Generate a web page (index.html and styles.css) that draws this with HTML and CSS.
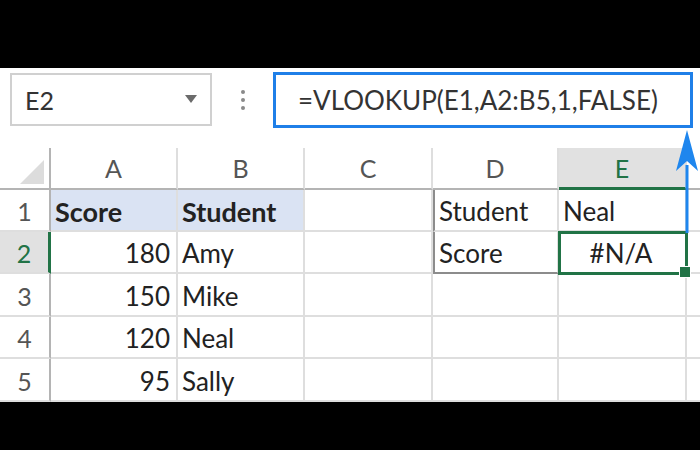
FILE: index.html
```html
<!DOCTYPE html>
<html lang="en">
<head>
    <meta charset="UTF-8">
    <meta name="viewport" content="width=device-width, initial-scale=1.0">
    <title>VLOOKUP #N/A</title>
    <link rel="stylesheet" href="styles.css">
</head>
<body>
    <div class="frame">
        <div class="band"></div>

        <!-- Name box and formula bar -->
        <div class="toolbar">
            <div class="name-box">
                <span>E2</span>
                <svg class="caret" width="12" height="8" viewBox="0 0 12 8"><path d="M0 0H12L6 8Z" fill="#6b6b6b"/></svg>
            </div>
            <div class="dots"><i></i><i></i><i></i></div>
            <div class="formula">=VLOOKUP(E1,A2:B5,1,FALSE)</div>
        </div>

        <!-- Worksheet grid -->
        <div class="sheet">
            <div class="corner"><span class="tri"></span></div>
            <div class="col-head">A</div>
            <div class="col-head">B</div>
            <div class="col-head">C</div>
            <div class="col-head">D</div>
            <div class="col-head active">E</div>
            <div class="col-head edge"></div>

            <div class="row-head">1</div>
            <div class="cell hl bold">Score</div>
            <div class="cell hl bold">Student</div>
            <div class="cell"></div>
            <div class="cell boxed">Student</div>
            <div class="cell">Neal</div>
            <div class="cell edge"></div>

            <div class="row-head active">2</div>
            <div class="cell num">180</div>
            <div class="cell">Amy</div>
            <div class="cell"></div>
            <div class="cell boxed bottom">Score</div>
            <div class="cell bottom selected">#N/A<span class="handle"></span></div>
            <div class="cell edge"></div>

            <div class="row-head">3</div>
            <div class="cell num">150</div>
            <div class="cell">Mike</div>
            <div class="cell"></div>
            <div class="cell"></div>
            <div class="cell"></div>
            <div class="cell edge"></div>

            <div class="row-head">4</div>
            <div class="cell num">120</div>
            <div class="cell">Neal</div>
            <div class="cell"></div>
            <div class="cell"></div>
            <div class="cell"></div>
            <div class="cell edge"></div>

            <div class="row-head">5</div>
            <div class="cell num">95</div>
            <div class="cell">Sally</div>
            <div class="cell"></div>
            <div class="cell"></div>
            <div class="cell"></div>
            <div class="cell edge"></div>
        </div>

        <div class="band bottom-band"></div>

        <!-- arrow from E2 up to the formula bar -->
        <svg class="arrow" width="26" height="106" viewBox="0 0 26 106">
            <path d="M13 36V104" stroke="#1e86ee" stroke-width="3"/>
            <path d="M13 1L24 42L13 32L2 42Z" fill="#1e86ee"/>
        </svg>
    </div>
</body>
</html>
```

FILE: styles.css
```css
body { margin: 0; background: #000; font-family: Lato, "Open Sans", sans-serif; color: #222; }
.frame { position: relative; width: 700px; height: 450px; overflow: hidden; background: #000; }
.band { height: 68px; background: #000; }
.bottom-band { height: 48px; }

.toolbar { height: 80px; background: #fff; display: flex; align-items: flex-start; box-sizing: border-box; padding-top: 4px; }
.name-box { margin: 1px 0 0 10px; width: 202px; height: 53px; box-sizing: border-box; border: 2px solid #d0d0d0; display: flex; align-items: center; justify-content: space-between; padding: 0 13px 0 13px; font-size: 25px; color: #333; }
.caret { margin-top: -2px; }
.dots { width: 61px; height: 56px; display: flex; flex-direction: column; align-items: center; justify-content: center; gap: 4px; }
.dots i { width: 4px; height: 4px; border-radius: 50%; background: #8a8a8a; }
.formula { width: 420px; height: 56px; box-sizing: border-box; border: 3px solid #1f7fe8; display: flex; align-items: center; padding-left: 22px; font-size: 26px; color: #333; }

.sheet { display: grid; grid-template-columns: 51px 127px 127px 128px 126px 128px 13px; grid-template-rows: 42px 42px 42px 43px 42px 43px; background: #fff; }
.sheet > div { box-sizing: border-box; position: relative; }
.corner { border-right: 2px solid #b4b4b4; border-bottom: 2px solid #b4b4b4; }
.tri { position: absolute; left: 20px; top: 12px; width: 24px; height: 24px; background: #dcdcdc; clip-path: polygon(100% 0, 100% 100%, 0 100%); }
.col-head { border-right: 2px solid #dedede; border-bottom: 2px solid #b4b4b4; display: flex; align-items: center; justify-content: center; font-size: 25px; color: #555; }
.col-head.active { background: #e1e1e1; color: #217346; border-bottom: 3px solid #217346; }
.col-head.edge { border-right: 0; }
.row-head { border-right: 2px solid #b4b4b4; border-bottom: 2px solid #dedede; display: flex; align-items: center; justify-content: center; font-size: 25px; color: #555; padding-top: 2px; }
.row-head.active { background: #e1e1e1; color: #217346; border-right: 3px solid #217346; }

.cell { border-right: 2px solid #dedede; border-bottom: 2px solid #dedede; display: flex; align-items: center; padding: 2px 6px 0 4px; font-size: 26px; color: #222; }
.cell.edge { border-right: 0; }
.hl { background: #dae3f3; }
.bold { font-weight: 700; font-size: 27px; }
.num { justify-content: flex-end; }
.boxed { border-left: 2px solid #8c8c8c; }
.bottom { border-bottom: 2px solid #8c8c8c; }
.sheet > .selected { justify-content: center; outline: 3px solid #217346; outline-offset: -2px; z-index: 1; }
.handle { position: absolute; right: -6px; bottom: -6px; width: 10px; height: 10px; background: #217346; border: 1px solid #fff; }

.arrow { position: absolute; left: 674px; top: 129px; z-index: 2; }
```
